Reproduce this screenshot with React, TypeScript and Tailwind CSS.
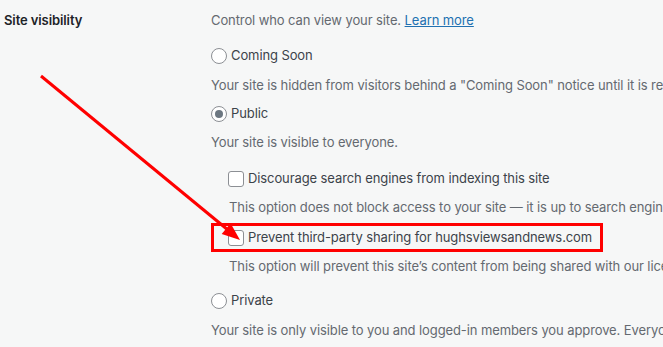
import React from 'react';

const Radio = ({ checked = false }: { checked?: boolean }) => (
  <span className="w-[16px] h-[16px] rounded-full border border-[#8c8f94] bg-white flex items-center justify-center shrink-0">
    {checked && <span className="w-[8px] h-[8px] rounded-full bg-[#6c7781]" />}
  </span>
);

const Checkbox = () => (
  <span className="w-[16px] h-[16px] rounded-[3px] border border-[#8c8f94] bg-white shrink-0" />
);

const Arrow = () => (
  <svg className="absolute left-0 top-0 pointer-events-none" width="663" height="347">
    <line x1="41" y1="76" x2="228" y2="230" stroke="#ff0000" strokeWidth="3" />
    <polygon points="240,240 221.7,234 230.6,223.2" fill="#ff0000" />
  </svg>
);

export default function App() {
  return (
    <div
      className="relative w-[663px] h-[347px] overflow-hidden bg-[#f6f7f7] text-[13px] tracking-[-0.1px] whitespace-nowrap"
      style={{ fontFamily: 'Inter, "Noto Sans", sans-serif' }}
    >
      <div className="flex pt-[6px]">
        <div className="w-[211px] pl-[4px] h-[28px] leading-[28px] font-semibold text-[#1d2327] shrink-0">
          Site visibility
        </div>
        <div className="flex flex-col text-[#646970]">
          <div className="h-[28px] leading-[28px]">
            Control who can view your site.{' '}
            <a className="text-[#2271b1] underline" href="#">Learn more</a>
          </div>

          <label className="mt-[8px] h-[28px] flex items-center gap-[4px] text-[13px] text-[#3c434a]">
            <Radio /> Coming Soon
          </label>
          <div className="mt-[1px] h-[28px] leading-[28px]">
            Your site is hidden from visitors behind a "Coming Soon" notice until it is ready for viewing.
          </div>

          <label className="mt-[1px] h-[28px] flex items-center gap-[4px] text-[13px] text-[#3c434a]">
            <Radio checked /> Public
          </label>
          <div className="h-[28px] leading-[28px]">Your site is visible to everyone.</div>

          <label className="mt-[9px] ml-[17px] h-[28px] flex items-center gap-[4px] text-[13px] text-[#3c434a]">
            <Checkbox /> Discourage search engines from indexing this site
          </label>
          <div className="ml-[18px] h-[28px] leading-[28px]">
            This option does not block access to your site — it is up to search engines to honor your request.
          </div>

          <label className="mt-[2px] w-[392px] h-[29px] border-[3px] border-[#ff0000] pl-[14px] flex items-center gap-[4px] text-[13px] text-[#3c434a]">
            <Checkbox /> Prevent third-party sharing for hughsviewsandnews.com
          </label>
          <div className="ml-[18px] h-[28px] leading-[28px]">
            This option will prevent this site’s content from being shared with our licensed network of content and research partners.
          </div>

          <label className="mt-[7px] h-[28px] flex items-center gap-[4px] text-[13px] text-[#3c434a]">
            <Radio /> Private
          </label>
          <div className="mt-[1px] h-[28px] leading-[28px]">
            Your site is only visible to you and logged-in members you approve. Everyone else will see a log in screen.
          </div>
        </div>
      </div>
      <Arrow />
    </div>
  );
}
